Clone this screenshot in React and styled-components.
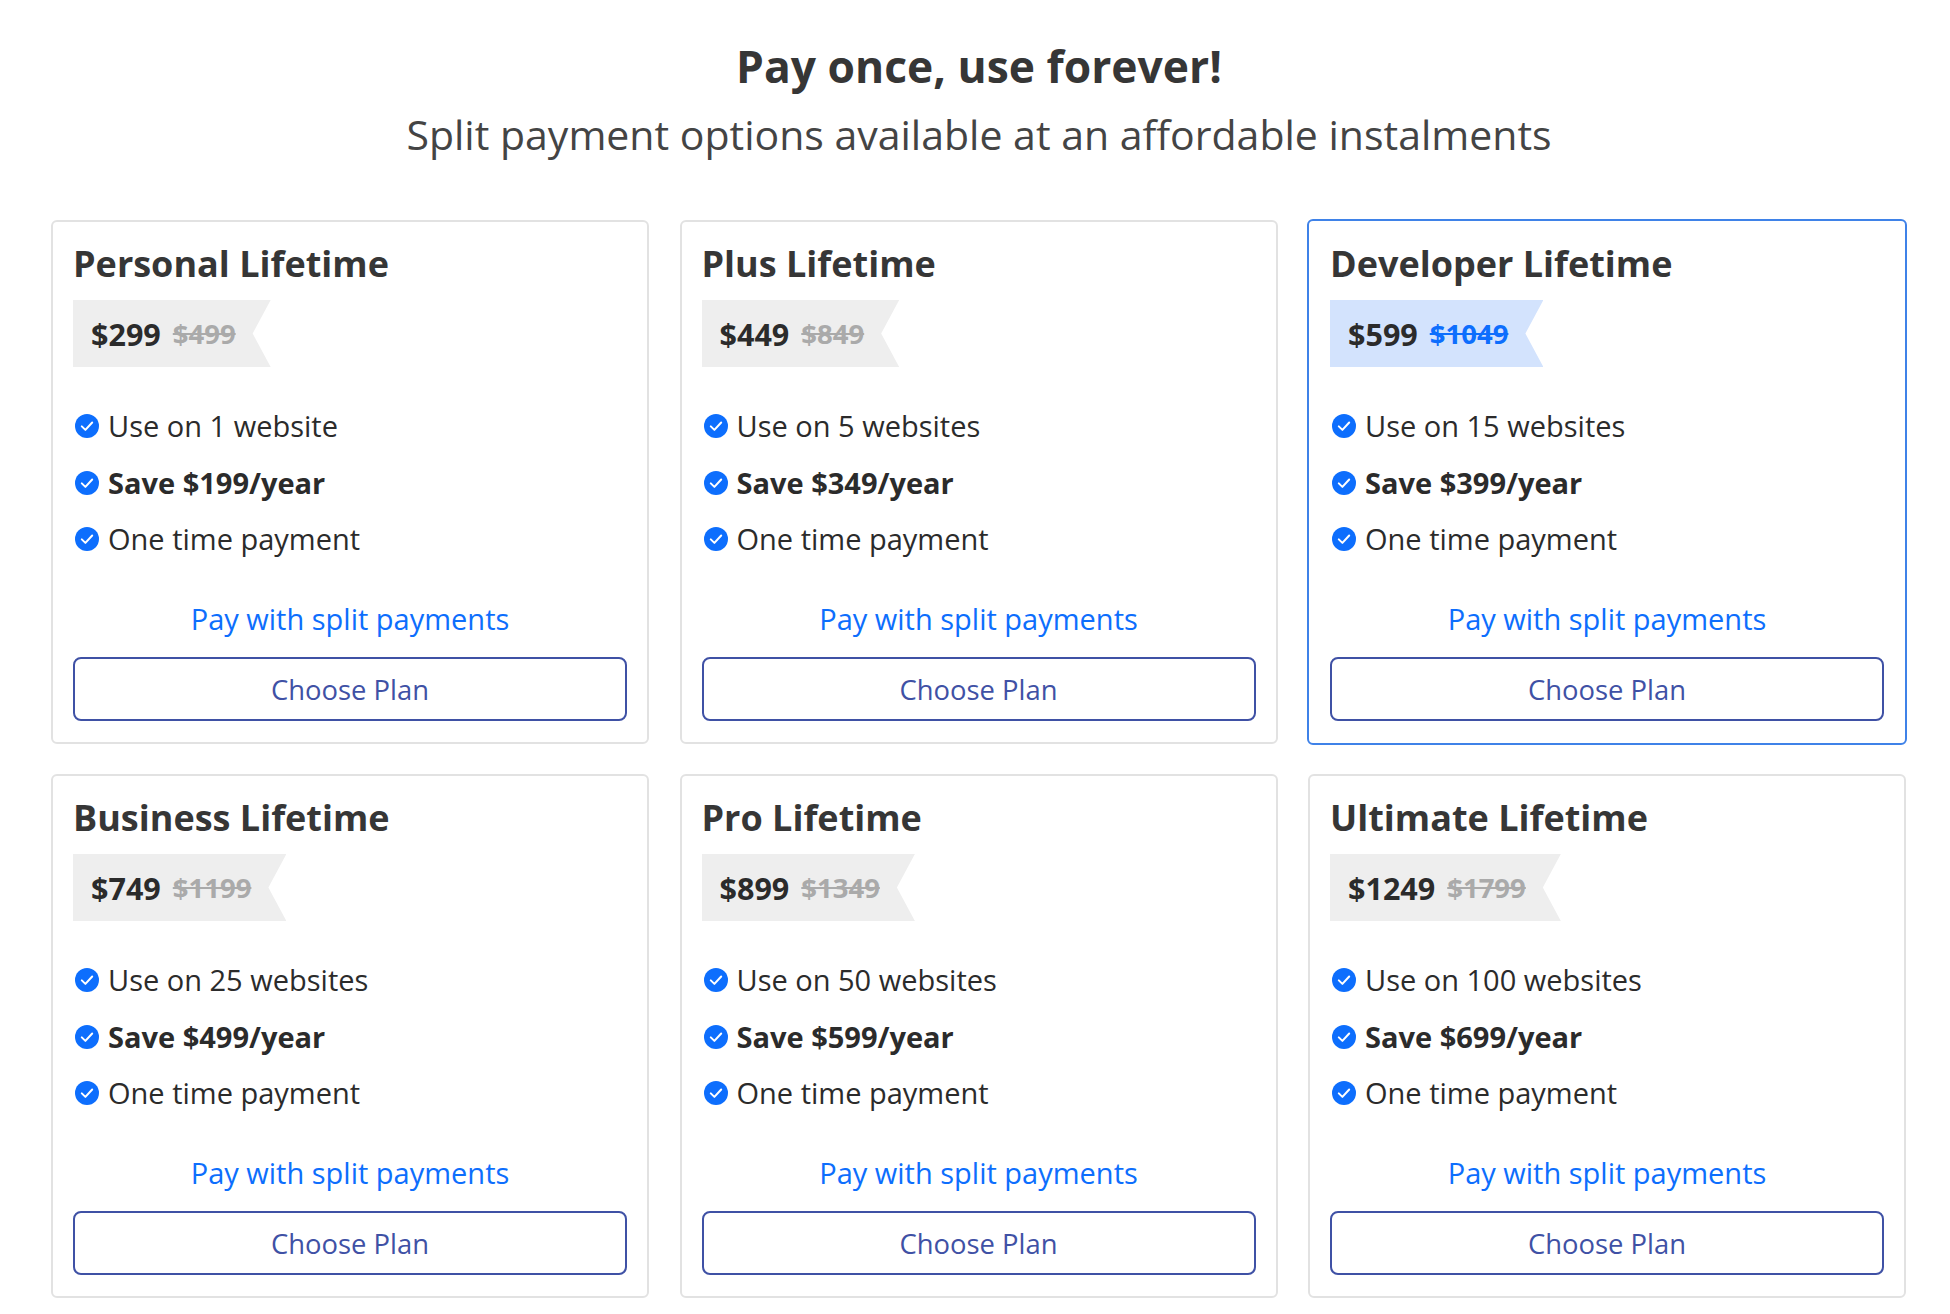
import React from "react";
import styled, { createGlobalStyle } from "styled-components";

const GlobalStyle = createGlobalStyle`
  html, body { margin: 0; padding: 0; background: #fff; }
  body { font-family: "Open Sans", "Liberation Sans", sans-serif; color: #333; }
`;

const plans = [
  { name: "Personal", price: "$299", old: "$499", sites: "Use on 1 website", save: "Save $199/year" },
  { name: "Plus", price: "$449", old: "$849", sites: "Use on 5 websites", save: "Save $349/year" },
  { name: "Developer", price: "$599", old: "$1049", sites: "Use on 15 websites", save: "Save $399/year", featured: true },
  { name: "Business", price: "$749", old: "$1199", sites: "Use on 25 websites", save: "Save $499/year" },
  { name: "Pro", price: "$899", old: "$1349", sites: "Use on 50 websites", save: "Save $599/year" },
  { name: "Ultimate", price: "$1249", old: "$1799", sites: "Use on 100 websites", save: "Save $699/year" },
];

function Check() {
  return (
    <CheckIcon viewBox="0 0 24 24">
      <circle cx="12" cy="12" r="12" fill="#0d6efd" />
      <path d="M6.8 12.4l3.6 3.5 6.8-7.4" fill="none" stroke="#fff" strokeWidth="2" strokeLinecap="round" strokeLinejoin="round" />
    </CheckIcon>
  );
}

function App() {
  return (
    <Page>
      <GlobalStyle />
      <Header>
        <Title>Pay once, use forever!</Title>
        <Subtitle>Split payment options available at an affordable instalments</Subtitle>
      </Header>
      <Grid>
        {plans.map((plan) => (
          <Card key={plan.name} $featured={plan.featured}>
            <PlanName>{plan.name} Lifetime</PlanName>
            <Ribbon $featured={plan.featured}>
              <Price>{plan.price}</Price>
              <OldPrice $featured={plan.featured}>{plan.old}</OldPrice>
            </Ribbon>
            <Features>
              <Feature><Check />{plan.sites}</Feature>
              <Feature $bold><Check />{plan.save}</Feature>
              <Feature><Check />One time payment</Feature>
            </Features>
            <SplitLink href="#">Pay with split payments</SplitLink>
            <ChooseButton>Choose Plan</ChooseButton>
          </Card>
        ))}
      </Grid>
    </Page>
  );
}

export default App;

const Page = styled.div`
  width: 1950px;
  height: 1314px;
  box-sizing: border-box;
  padding: 35px 43px 0 51px;
  overflow: hidden;
`;

const Header = styled.header`
  text-align: center;
  margin-bottom: 57px;
`;

const Title = styled.h1`
  margin: 0;
  font-size: 44.4px;
  line-height: 62px;
  font-weight: 700;
  color: #363636;
`;

const Subtitle = styled.p`
  margin: 8px 0 0;
  font-size: 41px;
  line-height: 58px;
  font-weight: 400;
  color: #444444;
`;

const Grid = styled.div`
  display: grid;
  grid-template-columns: repeat(3, 598px);
  grid-auto-rows: 524px;
  column-gap: 30.5px;
  row-gap: 30px;
`;

const Card = styled.div`
  box-sizing: border-box;
  display: flex;
  flex-direction: column;
  padding: 20px 20px 0;
  background: #fff;
  border: 2px solid ${(p) => (p.$featured ? "#3f82e8" : "#e2e2e2")};
  border-radius: 6px;
  ${(p) => p.$featured && "margin: -1px; padding: 21px 21px 0;"}
`;

const PlanName = styled.h2`
  margin: 0;
  font-size: 36px;
  line-height: 44px;
  font-weight: 700;
  color: #363636;
`;

const Ribbon = styled.div`
  align-self: flex-start;
  display: flex;
  align-items: center;
  gap: 12px;
  height: 67px;
  margin-top: 14px;
  padding: 0 35px 0 18px;
  background: ${(p) => (p.$featured ? "#d3e3fd" : "#eeeeee")};
  clip-path: polygon(0 0, 100% 0, calc(100% - 18px) 50%, 100% 100%, 0 100%);
`;

const Price = styled.span`
  font-size: 30.5px;
  font-weight: 700;
  color: #2b2b2b;
`;

const OldPrice = styled.span`
  font-size: 27.5px;
  font-weight: 700;
  text-decoration: line-through;
  color: ${(p) => (p.$featured ? "#0d6efd" : "#aaaaaa")};
`;

const Features = styled.ul`
  list-style: none;
  margin: 30px 0 0;
  padding: 0;
  display: flex;
  flex-direction: column;
`;

const Feature = styled.li`
  display: flex;
  align-items: center;
  gap: 9px;
  height: 56.7px;
  font-size: 29px;
  font-weight: ${(p) => (p.$bold ? 700 : 400)};
  color: #2b2b2b;
`;

const CheckIcon = styled.svg`
  width: 24px;
  height: 24px;
  margin: 1px 0 0 2px;
  flex-shrink: 0;
`;

const SplitLink = styled.a`
  display: block;
  margin-top: 32px;
  text-align: center;
  font-size: 29px;
  line-height: 40px;
  color: #0d6efd;
  text-decoration: none;
`;

const ChooseButton = styled.button`
  display: block;
  width: 100%;
  height: 64px;
  margin-top: 18px;
  background: #fff;
  border: 2px solid #3f51a5;
  border-radius: 8px;
  font-family: inherit;
  font-size: 27.4px;
  color: #3f51a5;
`;
